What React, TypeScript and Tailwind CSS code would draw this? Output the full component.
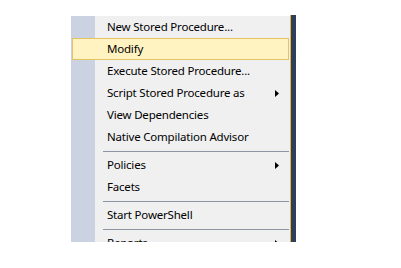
import type { ReactNode } from "react";

type Item =
  | { kind: "item"; label: string; submenu?: boolean; active?: boolean }
  | { kind: "sep" };

const items: Item[] = [
  { kind: "item", label: "New Stored Procedure..." },
  { kind: "item", label: "Modify", active: true },
  { kind: "item", label: "Execute Stored Procedure..." },
  { kind: "item", label: "Script Stored Procedure as", submenu: true },
  { kind: "item", label: "View Dependencies" },
  { kind: "item", label: "Native Compilation Advisor" },
  { kind: "sep" },
  { kind: "item", label: "Policies", submenu: true },
  { kind: "item", label: "Facets" },
  { kind: "sep" },
  { kind: "item", label: "Start PowerShell" },
  { kind: "sep" },
  { kind: "item", label: "Reports", submenu: true },
];

function Arrow() {
  return (
    <svg width="4" height="7" viewBox="0 0 4 7" className="ml-auto mr-[11px] shrink-0">
      <polygon points="0,0 4,3.5 0,7" fill="#000" />
    </svg>
  );
}

function Row({ label, submenu, active }: { label: string; submenu?: boolean; active?: boolean }) {
  let content: ReactNode = (
    <>
      <span className="whitespace-nowrap">{label}</span>
      {submenu && <Arrow />}
    </>
  );
  if (active) {
    return (
      <div className="mx-px flex h-[22px] items-center border border-[#e5c365] bg-[#fff3c1] pl-[34px]">
        {content}
      </div>
    );
  }
  return <div className="flex h-[22px] items-center pl-[36px]">{content}</div>;
}

export default function App() {
  return (
    <div className="h-[268px] w-[401px] overflow-hidden bg-white">
      <div className="flex items-start pl-[71px]">
        <div
          className="mt-[16px] h-[226px] w-[219px] overflow-hidden bg-[linear-gradient(to_right,#cbd3e2_24px,#f0f0f0_24px)] text-[11.5px] tracking-[-0.2px] text-black"
          style={{ fontFamily: '"Noto Sans", "Open Sans", sans-serif' }}
        >
          {items.map((it, i) =>
            it.kind === "sep" ? (
              <div key={i} className="pb-[2px] pt-[3px]">
                <div className="ml-[32px] mr-px h-px bg-[#8d96a3]" />
              </div>
            ) : (
              <Row key={i} label={it.label} submenu={it.submenu} active={it.active} />
            )
          )}
        </div>
        <div className="mt-[15px] h-[227px] w-px bg-[#e6b43c]" />
        <div className="mt-[15px] h-[227px] w-[5px] bg-[#2e3f5c]" />
      </div>
    </div>
  );
}
